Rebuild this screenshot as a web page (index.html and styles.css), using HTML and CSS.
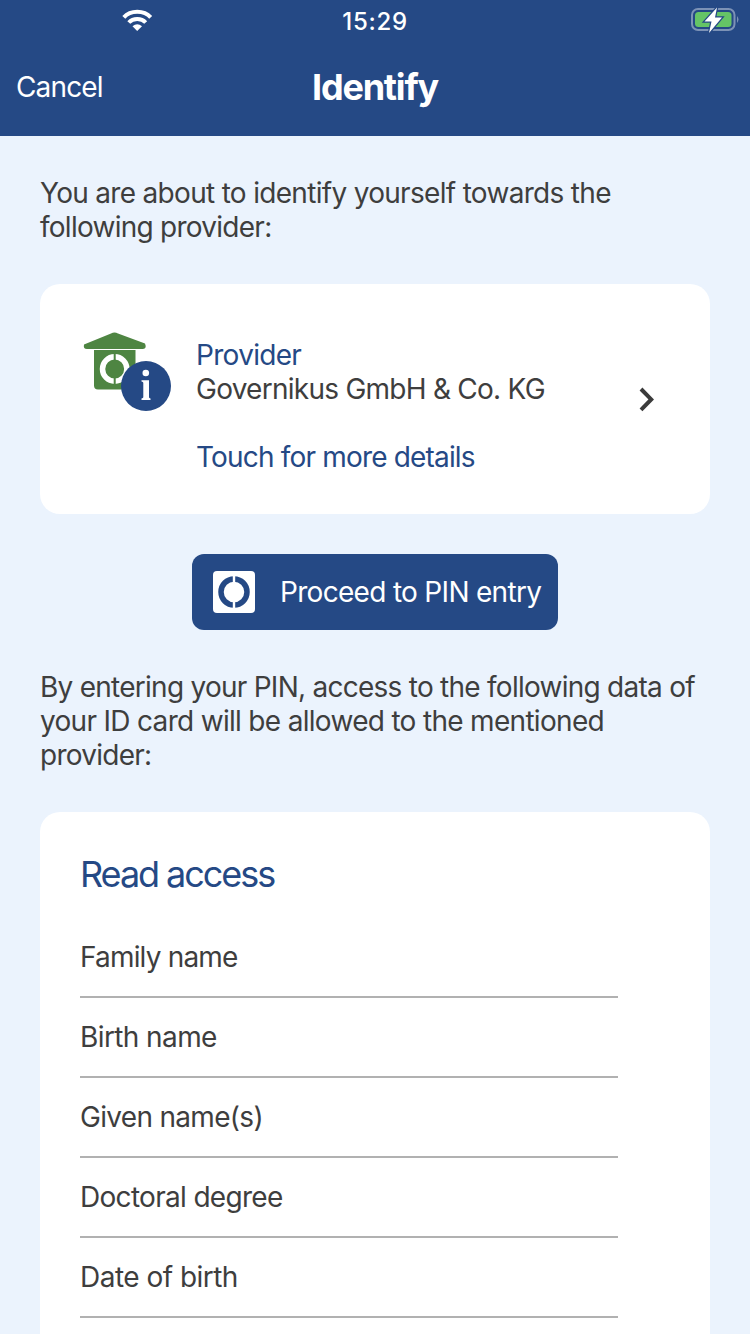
FILE: index.html
```html
<!DOCTYPE html>
<html lang="en">
<head>
<meta charset="utf-8">
<title>Identify</title>
<link rel="stylesheet" href="styles.css">
</head>
<body>
<header class="header">
  <div class="status">
    <svg class="wifi" width="32" height="24" viewBox="0 0 32 24"><g fill="none" stroke="#fff" stroke-width="4"><path d="M2.800 10.300C9.500 3 23 3 29.700 10.300"/><path d="M7.800 15.500C12.200 10.800 20.300 10.800 24.700 15.500"/></g><path fill="#fff" d="M11.500 19.200Q16.200 15.400 21 19.200L16.200 23.900z"/></svg>
    <time class="time"><span class="t">15:29</span></time>
    <svg class="battery" width="50" height="30" viewBox="0 0 50 30"><rect x="3" y="4" width="42.500" height="21" rx="6" fill="none" stroke="#7c92b6" stroke-width="2"/><path d="M48 11q3 3.500 0 7z" fill="#7c92b6"/><rect x="6" y="7" width="36.500" height="15" rx="3.500" fill="#65c466"/><path d="M28 2.500L15.500 16.500h7L20 28 33 12.500H26z" fill="#fff" stroke="#254985" stroke-width="2.500" paint-order="stroke"/></svg>
  </div>
  <nav class="nav"><a class="cancel"><span class="t">Cancel</span></a><h1 class="title"><span class="t">Identify</span></h1></nav>
</header>
<main class="content">
  <p class="copy intro"><span class="t">You are about to identify yourself towards the</span><br><span class="t narrow">following provider:</span></p>
  <section class="card provider">
    <svg class="provider-icon" width="90" height="82" viewBox="0 0 90 82"><path fill="#4e8542" d="M1 14.500L28 3.500Q31.500 1.500 35 3.500L62 13.500Q64 18.500 60 19H4Q0 19 1 14.500zM11 20h41.500v39.500H15q-4 0-4-4z"/><circle cx="31.700" cy="39" r="12.200" fill="none" stroke="#fff" stroke-width="5.500"/><path d="M31.700 22v9M31.700 47v9" stroke="#4e8542" stroke-width="2"/><circle cx="63" cy="56" r="25" fill="#254985"/><circle cx="62.800" cy="43" r="3.300" fill="#fff"/><path fill="#fff" d="M58.500 50.300H66v17q0 1 1.500 1.200V70h-9v-1.500q1.800-.2 1.800-1.200V52.800q0-1-1.800-1.200z"/></svg>
    <div class="provider-text"><div class="blue"><span class="t">Provider</span></div><div><span class="t narrow">Governikus GmbH &amp; Co. KG</span></div><div class="blue more"><span class="t narrower">Touch for more details</span></div></div>
    <svg class="chevron" width="18" height="26" viewBox="0 0 18 26"><path d="M3 3L13.200 13.400 3 23.800" fill="none" stroke="#3b3b3b" stroke-width="4"/></svg>
  </section>
  <button class="proceed"><svg width="42" height="42" viewBox="0 0 42 42"><rect width="42" height="42" rx="4" fill="#fff"/><circle cx="21" cy="21" r="13" fill="none" stroke="#254985" stroke-width="5.500"/><path d="M21 4v8M21 30v8" stroke="#fff" stroke-width="2.400"/></svg><span class="t">Proceed to PIN entry</span></button>
  <p class="copy notice"><span class="t narrow">By entering your PIN, access to the following data of</span><br><span class="t">your ID card will be allowed to the mentioned</span><br><span class="t narrow">provider:</span></p>
  <section class="card access"><h2><span class="t">Read access</span></h2><ul><li><span class="t narrower">Family name</span></li><li><span class="t wide">Birth name</span></li><li><span class="t">Given name(s)</span></li><li><span class="t">Doctoral degree</span></li><li><span class="t wider">Date of birth</span></li></ul></section>
</main>
</body>
</html>
```
FILE: styles.css
```css
* { box-sizing: border-box; }
body { margin: 0; height: 1334px; overflow: hidden; background: #ebf3fd; color: #3e3e3e; font: 400 28px/34px Inter, sans-serif; letter-spacing: -0.69px; }
h1, h2, p, ul { margin: 0; padding: 0; }
svg { display: block; flex: none; }
.t { white-space: nowrap; }
.narrow { letter-spacing: -0.74px; }
.narrower { letter-spacing: -0.82px; }
.wide { letter-spacing: -0.6px; }
.wider { letter-spacing: -0.52px; }
.header { height: 136px; background: #254985; color: #fff; }
.status { height: 40px; display: grid; grid-template-columns: 1fr 70px 1fr; align-items: center; }
.wifi { margin: -2px 0 0 121px; }
.time { padding-top: 3px; font-size: 24px; font-weight: 500; letter-spacing: 0.7px; text-align: center; }
.battery { justify-self: end; margin-right: 11px; }
.nav { height: 96px; padding: 0 16px 2px; display: grid; grid-template-columns: 1fr auto 1fr; align-items: center; }
.cancel { letter-spacing: -0.85px; }
.title { font-size: 36px; font-weight: 700; letter-spacing: -1.2px; }
.content { padding: 40px 40px 0; }
.card { background: #fff; border-radius: 20px; }
.provider { height: 230px; margin-top: 40px; padding: 46px 54px 0 43px; display: flex; }
.provider-text { flex: 1; padding: 8px 0 0 23px; }
.blue, h2 { color: #254985; }
.more { margin-top: 34px; }
.chevron { margin-top: 56px; }
.proceed { width: 366px; height: 76px; margin: 40px auto; padding: 0 21px; border: 0; border-radius: 12px; background: #254985; color: #fff; font: inherit; letter-spacing: inherit; display: flex; align-items: center; gap: 25px; }
.access { height: 560px; margin-top: 40px; padding: 40px; }
h2 { font-size: 36px; line-height: 44px; font-weight: 400; letter-spacing: -2.05px; }
ul { width: 538px; margin-top: 22px; list-style: none; }
li { height: 80px; padding-top: 22px; border-bottom: 2px solid #b1b1b1; }
```
